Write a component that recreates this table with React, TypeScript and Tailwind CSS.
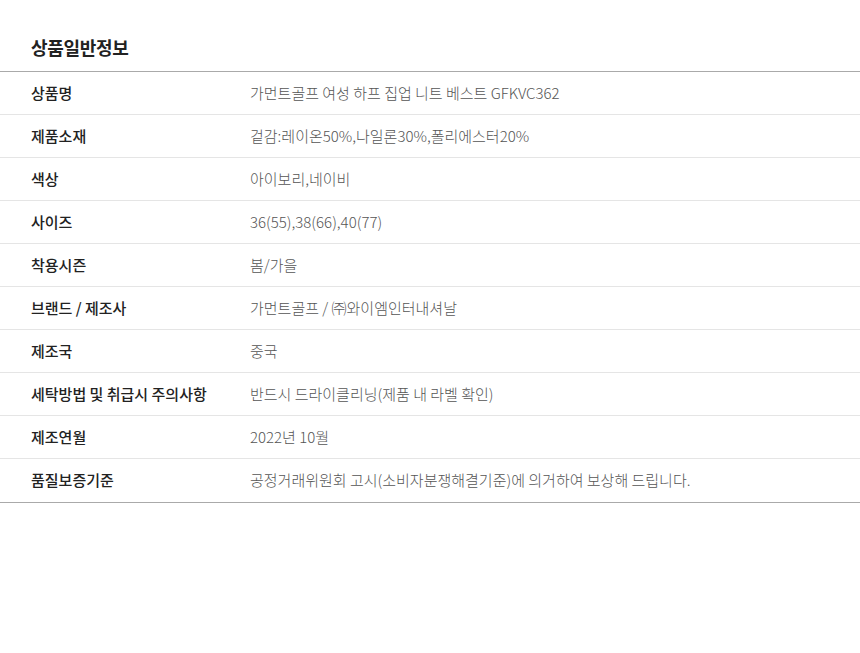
import React from 'react'

var rows = [
  ['상품명', '가먼트골프 여성 하프 집업 니트 베스트 GFKVC362'],
  ['제품소재', '겉감:레이온50%,나일론30%,폴리에스터20%'],
  ['색상', '아이보리,네이비'],
  ['사이즈', '36(55),38(66),40(77)'],
  ['착용시즌', '봄/가을'],
  ['브랜드 / 제조사', '가먼트골프 / ㈜와이엠인터내셔날'],
  ['제조국', '중국'],
  ['세탁방법 및 취급시 주의사항', '반드시 드라이클리닝(제품 내 라벨 확인)'],
  ['제조연월', '2022년 10월'],
  ['품질보증기준', '공정거래위원회 고시(소비자분쟁해결기준)에 의거하여 보상해 드립니다.'],
]

export default function App() {
  return (
    <div className="w-[860px] min-h-[653px] bg-white font-['Noto_Sans_CJK_KR','Noto_Sans',sans-serif]">
      <div className="h-[71px] flex items-center px-[31px] pt-[24px]">
        <h2 className="text-[18px] font-bold text-[#222] tracking-[-0.3px]">상품일반정보</h2>
      </div>
      <div className="border-t border-b border-[#aaaaaa]">
        {rows.map(function(row, i) {
          var cls = i === 0 ? 'h-[42px]' : i === rows.length - 1 ? 'h-[44px] border-t border-[#e5e5e5]' : 'h-[43px] border-t border-[#e5e5e5]'
          return (
            <div key={i} className={'flex items-center ' + cls}>
              <div className="w-[250px] pl-[31px] text-[15px] font-medium text-[#222]">{row[0]}</div>
              <div className="flex-1 text-[15px] font-light text-[#555]">{row[1]}</div>
            </div>
          )
        })}
      </div>
    </div>
  )
}
